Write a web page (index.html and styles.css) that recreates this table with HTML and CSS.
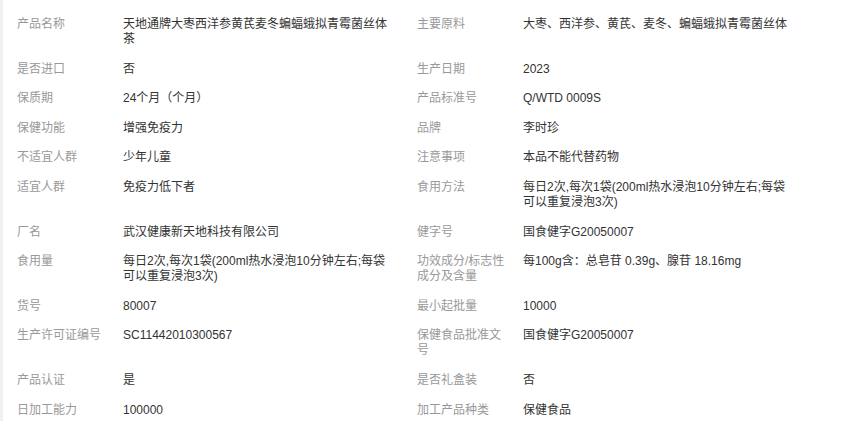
FILE: index.html
```html
<!DOCTYPE html>
<html lang="zh-CN">

<head>
    <meta charset="UTF-8">
    <meta name="viewport" content="width=device-width, initial-scale=1.0">
    <title>产品参数</title>
    <link rel="stylesheet" href="styles.css">
</head>

<body>
    <div id="params">
        <!-- 商品参数 -->
        <div class="param">
            <span class="param-name">产品名称</span>
            <span class="param-value">天地通牌大枣西洋参黄芪麦冬蝙蝠蛾拟青霉菌丝体茶</span>
        </div>
        <div class="param">
            <span class="param-name">主要原料</span>
            <span class="param-value">大枣、西洋参、黄芪、麦冬、蝙蝠蛾拟青霉菌丝体</span>
        </div>
        <div class="param">
            <span class="param-name">是否进口</span>
            <span class="param-value">否</span>
        </div>
        <div class="param">
            <span class="param-name">生产日期</span>
            <span class="param-value">2023</span>
        </div>
        <div class="param">
            <span class="param-name">保质期</span>
            <span class="param-value">24个月（个月）</span>
        </div>
        <div class="param">
            <span class="param-name">产品标准号</span>
            <span class="param-value">Q/WTD 0009S</span>
        </div>
        <div class="param">
            <span class="param-name">保健功能</span>
            <span class="param-value">增强免疫力</span>
        </div>
        <div class="param">
            <span class="param-name">品牌</span>
            <span class="param-value">李时珍</span>
        </div>
        <div class="param">
            <span class="param-name">不适宜人群</span>
            <span class="param-value">少年儿童</span>
        </div>
        <div class="param">
            <span class="param-name">注意事项</span>
            <span class="param-value">本品不能代替药物</span>
        </div>
        <div class="param">
            <span class="param-name">适宜人群</span>
            <span class="param-value">免疫力低下者</span>
        </div>
        <div class="param">
            <span class="param-name">食用方法</span>
            <span class="param-value">每日2次,每次1袋(200ml热水浸泡10分钟左右;每袋可以重复浸泡3次)</span>
        </div>
        <div class="param">
            <span class="param-name">厂名</span>
            <span class="param-value">武汉健康新天地科技有限公司</span>
        </div>
        <div class="param">
            <span class="param-name">健字号</span>
            <span class="param-value">国食健字G20050007</span>
        </div>
        <div class="param">
            <span class="param-name">食用量</span>
            <span class="param-value">每日2次,每次1袋(200ml热水浸泡10分钟左右;每袋可以重复浸泡3次)</span>
        </div>
        <div class="param">
            <span class="param-name">功效成分/标志性成分及含量</span>
            <span class="param-value">每100g含：总皂苷 0.39g、腺苷 18.16mg</span>
        </div>
        <div class="param">
            <span class="param-name">货号</span>
            <span class="param-value">80007</span>
        </div>
        <div class="param">
            <span class="param-name">最小起批量</span>
            <span class="param-value">10000</span>
        </div>
        <div class="param">
            <span class="param-name">生产许可证编号</span>
            <span class="param-value">SC11442010300567</span>
        </div>
        <div class="param">
            <span class="param-name">保健食品批准文号</span>
            <span class="param-value">国食健字G20050007</span>
        </div>
        <div class="param">
            <span class="param-name">产品认证</span>
            <span class="param-value">是</span>
        </div>
        <div class="param">
            <span class="param-name">是否礼盒装</span>
            <span class="param-value">否</span>
        </div>
        <div class="param">
            <span class="param-name">日加工能力</span>
            <span class="param-value">100000</span>
        </div>
        <div class="param">
            <span class="param-name">加工产品种类</span>
            <span class="param-value">保健食品</span>
        </div>
    </div>
</body>

</html>
```

FILE: styles.css
```css
* {
    margin: 0;
    padding: 0;
    box-sizing: border-box;
}

html,
body {
    height: 100%;
    width: 100%;
    overflow: hidden;
}

body {
    font-family: "Liberation Sans", "Noto Sans CJK SC", sans-serif;
    font-size: 12px;
    line-height: 15px;
    background-color: #fff;
    border-left: 3px solid #f0f0f0;
    padding: 17px 0 0 14px;
}

#params {
    display: grid;
    grid-template-columns: 400px 400px;
    row-gap: 14.6px;
}

.param {
    display: flex;
    align-items: flex-start;
}

.param-name {
    width: 90px;
    margin-right: 16px;
    color: #999;
}

.param-value {
    width: 270px;
    color: #333;
}
```
